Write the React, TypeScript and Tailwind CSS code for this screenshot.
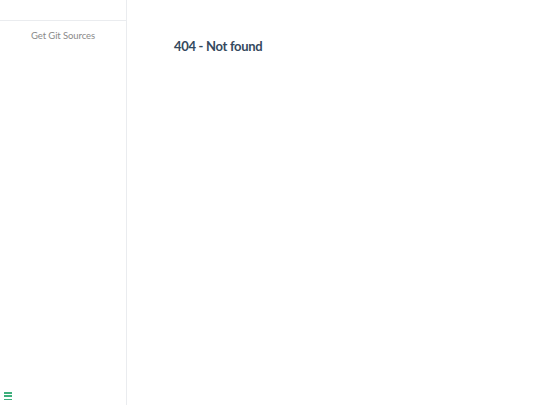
export default function App() {
  return (
    <div className="flex h-[405px] w-[540px] overflow-hidden bg-white font-['Lato','Noto_Sans',sans-serif]">
      {/* Sidebar */}
      <aside className="relative flex w-[127px] shrink-0 flex-col border-r border-[#eaecef]">
        <div className="h-[21px] border-b border-[#eaecef]" />
        <a className="mt-[8px] block text-center text-[9.5px] font-normal tracking-[-0.1px] text-[#8a8a8a]">Get Git Sources</a>
        <button className="absolute bottom-[5px] left-[4px] flex h-[8px] w-[8px] flex-col justify-between">
          <span className="block h-[1.5px] w-full bg-[#3eaf7c]" />
          <span className="block h-[1.5px] w-full bg-[#3eaf7c]" />
          <span className="block h-[1.5px] w-full bg-[#3eaf7c]" />
        </button>
      </aside>

      {/* Content */}
      <main className="flex-1 pl-[47px] pt-[37px]">
        <h1 className="text-[13px] font-bold tracking-[-0.3px] text-[#34495e]">404 - Not found</h1>
      </main>
    </div>
  );
}
